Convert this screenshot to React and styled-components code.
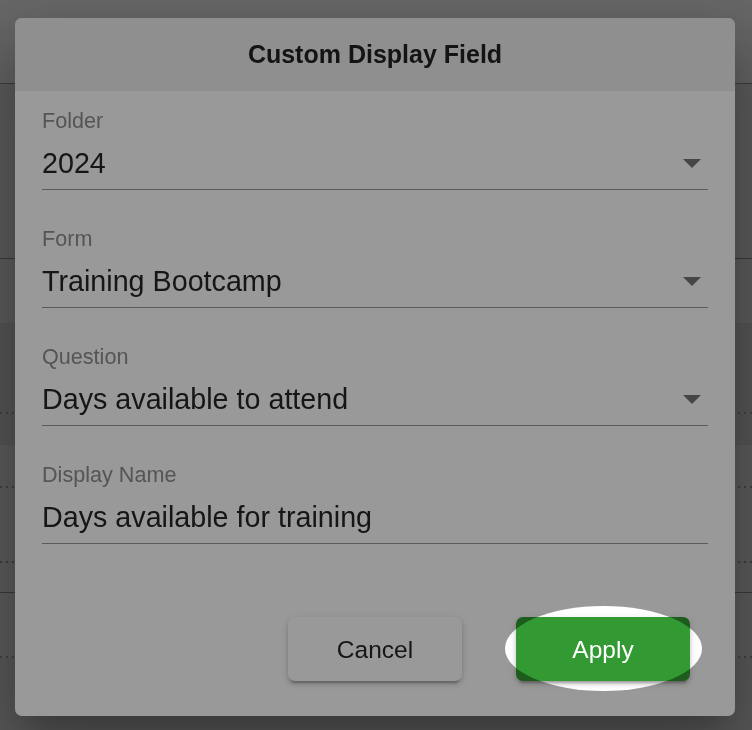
import React from "react";
import styled, { createGlobalStyle } from "styled-components";

const GlobalStyle = createGlobalStyle`
  html, body {
    margin: 0;
    padding: 0;
    height: 100%;
    overflow: hidden;
  }
  body {
    font-family: "Liberation Sans", Arial, sans-serif;
    background: #939393;
  }
  * {
    box-sizing: border-box;
  }
`;

// page that sits behind the modal
const Page = styled.div`
  display: flex;
  flex-direction: column;
  height: 730px;
  background: #939393;
`;

const TopBar = styled.div`
  flex-shrink: 0;
  height: 84px;
  background: linear-gradient(#acacac, #9f9f9f);
  border-bottom: 1px solid #626262;
`;

const Strip = styled.div`
  position: relative;
  flex-shrink: 0;
  height: ${(p) => p.$h}px;
  background-color: ${(p) => (p.$dark ? "#8a8a8a" : "#949494")};
  border-bottom: ${(p) => (p.$line === "solid" ? "1px solid #5f5f5f" : "none")};
  box-shadow: ${(p) => (p.$line === "solid" && p.$raised ? "0 2px 4px rgba(0,0,0,0.3)" : "none")};
  background-image: ${(p) =>
    p.$line === "dotted"
      ? "repeating-linear-gradient(90deg, #686868 0 2px, transparent 2px 6px)"
      : "none"};
  background-size: 100% 2px;
  background-position: left bottom;
  background-repeat: no-repeat;
`;

const Rest = styled.div`
  flex: 1;
  background: #909090;
`;

// modal
const Layer = styled.div`
  position: fixed;
  inset: 0;
  display: flex;
  align-items: flex-start;
  padding: 18px 0 0 15px;
`;

const Dialog = styled.div`
  width: 720px;
  display: flex;
  flex-direction: column;
  background: #fff;
  border-radius: 7px;
  overflow: hidden;
  box-shadow: 0 19px 26px -12px rgba(0, 0, 0, 0.2),
    0 42px 66px 5px rgba(0, 0, 0, 0.14), 0 16px 80px 14px rgba(0, 0, 0, 0.12);
`;

const Header = styled.div`
  height: 73px;
  display: flex;
  align-items: center;
  justify-content: center;
  background: #eeeeee;
  color: #222;
  font-size: 25px;
  font-weight: 700;
`;

const Content = styled.div`
  display: flex;
  flex-direction: column;
  gap: 38px;
  padding: 19px 27px 0;
`;

const Field = styled.div`
  display: flex;
  flex-direction: column;
`;

const Label = styled.label`
  font-size: 21.6px;
  line-height: 21px;
  color: #8e8e8e;
  margin-bottom: 13px;
`;

const InputRow = styled.div`
  display: flex;
  align-items: center;
  height: 46px;
  padding: 2px 0 9px;
  border-bottom: 1px solid #989898;
  font-size: 28.7px;
  color: #262626;
`;

const Value = styled.span`
  flex: 1;
  line-height: 34px;
  white-space: nowrap;
`;

const Caret = styled.svg`
  width: 18px;
  height: 9px;
  margin-right: 7px;
  fill: #767676;
`;

const Actions = styled.div`
  display: flex;
  justify-content: flex-end;
  gap: 54px;
  padding: 73px 45px 35px;
`;

const Button = styled.button`
  width: 174px;
  height: 64px;
  padding: 2px 0 0;
  border: none;
  border-radius: 7px;
  font-family: inherit;
  font-size: 24.5px;
  cursor: pointer;
  background: ${(p) => (p.$primary ? "#339933" : "#ffffff")};
  color: ${(p) => (p.$primary ? "#ffffff" : "#262626")};
  box-shadow: 0 5px 2px -3px rgba(0, 0, 0, 0.2), 0 3px 4px 0 rgba(0, 0, 0, 0.14),
    0 2px 9px 0 rgba(0, 0, 0, 0.12);
`;

// tour spotlight over everything
const Spotlight = styled.div`
  position: fixed;
  left: 505px;
  top: 606px;
  width: 197px;
  height: 85px;
  border-radius: 50%;
  pointer-events: none;
  box-shadow: 0 0 0 2000px rgba(0, 0, 0, 0.4);
`;

const fields = [
  { label: "Folder", value: "2024", select: true },
  { label: "Form", value: "Training Bootcamp", select: true },
  { label: "Question", value: "Days available to attend", select: true },
  { label: "Display Name", value: "Days available for training" },
];

const App = () => {
  return (
    <>
      <GlobalStyle />
      <Page>
        <TopBar />
        <Strip $h={175} $line="solid" />
        <Strip $h={64} />
        <Strip $h={91} $dark $line="dotted" />
        <Strip $h={31} $dark />
        <Strip $h={43} $line="dotted" />
        <Strip $h={75} $line="dotted" />
        <Strip $h={30} $line="solid" $raised />
        <Strip $h={65} $line="dotted" />
        <Rest />
      </Page>
      <Layer>
        <Dialog>
          <Header>Custom Display Field</Header>
          <Content>
            {fields.map((f) => (
              <Field key={f.label}>
                <Label>{f.label}</Label>
                <InputRow>
                  <Value>{f.value}</Value>
                  {f.select && (
                    <Caret viewBox="0 0 10 5">
                      <path d="M0 0l5 5 5-5z" />
                    </Caret>
                  )}
                </InputRow>
              </Field>
            ))}
          </Content>
          <Actions>
            <Button>Cancel</Button>
            <Button $primary>Apply</Button>
          </Actions>
        </Dialog>
      </Layer>
      <Spotlight />
    </>
  );
};

export default App;
